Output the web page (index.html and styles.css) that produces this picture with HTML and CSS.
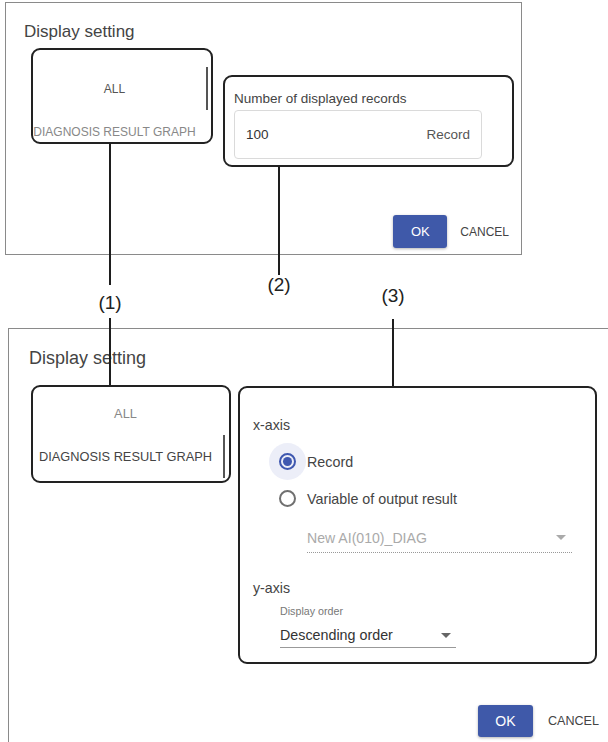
FILE: index.html
```html
<!DOCTYPE html>
<html>
  <head>
    <meta charset="utf-8" />
    <title>Display setting</title>
    <meta name="viewport" content="width=device-width, initial-scale=1.0" />
    <link rel="stylesheet" href="styles.css">
  </head>
  <body>
    <div class="page">

      <section class="dialog dialog-top">
        <h2 class="dialog-title">Display setting</h2>
        <div class="dialog-body">
          <div class="callout tabs-box">
            <ul class="tabs">
              <li class="tab active">ALL</li>
              <li class="tab">DIAGNOSIS RESULT GRAPH</li>
            </ul>
          </div>
          <div class="callout records-box">
            <div class="field-label">Number of displayed records</div>
            <div class="field">
              <span class="field-value">100</span>
              <span class="field-unit">Record</span>
            </div>
          </div>
        </div>
        <div class="actions">
          <button class="btn-ok">OK</button>
          <button class="btn-cancel">CANCEL</button>
        </div>
      </section>

      <section class="dialog dialog-bottom">
        <h2 class="dialog-title">Display setting</h2>
        <div class="dialog-body">
          <div class="callout tabs-box">
            <ul class="tabs">
              <li class="tab">ALL</li>
              <li class="tab active">DIAGNOSIS RESULT GRAPH</li>
            </ul>
          </div>
          <div class="callout axis-box">
            <div class="axis-title">x-axis</div>
            <div class="radio-row">
              <span class="radio-halo"><span class="radio checked"></span></span>
              <span class="radio-label">Record</span>
            </div>
            <div class="radio-row">
              <span class="radio-halo"><span class="radio"></span></span>
              <span class="radio-label">Variable of output result</span>
            </div>
            <div class="select select-disabled">
              <span>New AI(010)_DIAG</span>
              <span class="arrow"></span>
            </div>
            <div class="axis-title axis-y">y-axis</div>
            <div class="small-label">Display order</div>
            <div class="select select-order">
              <span>Descending order</span>
              <span class="arrow"></span>
            </div>
          </div>
        </div>
        <div class="actions">
          <button class="btn-ok">OK</button>
          <button class="btn-cancel">CANCEL</button>
        </div>
      </section>

      <!-- leader lines for the callouts -->
      <div class="leader leader-1a"></div>
      <div class="leader leader-1b"></div>
      <div class="leader leader-2"></div>
      <div class="leader leader-3"></div>
      <span class="mark mark-1">(1)</span>
      <span class="mark mark-2">(2)</span>
      <span class="mark mark-3">(3)</span>

    </div>
  </body>
</html>
```

FILE: styles.css
```css
body {
  margin: 0;
  background: #fff;
  font-family: "Liberation Sans", Arial, sans-serif;
  color: #444;
}

.page {
  position: relative;
  width: 608px;
  height: 742px;
  overflow: hidden;
}

.dialog {
  box-sizing: border-box;
  display: flex;
  flex-direction: column;
  border: 1px solid #8a8a8a;
  background: #fff;
}

.dialog-title {
  margin: 0;
  font-weight: 400;
  color: #444;
}

.dialog-body {
  display: flex;
  align-items: flex-start;
}

.callout {
  box-sizing: border-box;
  border: 2px solid #222;
  border-radius: 9px;
  overflow: hidden;
}

/* top dialog */
.dialog-top {
  margin: 2px 0 0 5px;
  width: 517px;
  height: 253px;
  padding: 19px 4px 0 0;
}
.dialog-top .dialog-title {
  margin-left: 18px;
  font-size: 17px;
  line-height: 20px;
}
.dialog-top .dialog-body {
  margin-top: 6px;
  margin-left: 25px;
}
.dialog-top .tabs-box {
  width: 182px;
  height: 96px;
}
.dialog-top .tabs {
  padding-top: 17px;
}
.dialog-top .tab {
  width: 175px;
  padding-right: 10px;
  font-size: 12px;
  color: #888;
}
.dialog-top .tab.active {
  color: #555;
}

.records-box {
  margin: 27px 0 0 10px;
  width: 291px;
  height: 92px;
  padding: 14px 0 0 9px;
}
.field-label {
  font-size: 13.5px;
  line-height: 16px;
  color: #444;
}
.field {
  box-sizing: border-box;
  margin-top: 3px;
  width: 248px;
  height: 49px;
  border: 1px solid #dadada;
  border-radius: 4px;
  padding: 0 11px;
  display: flex;
  align-items: center;
  justify-content: space-between;
  font-size: 13.5px;
}
.field-value {
  color: #333;
}
.field-unit {
  color: #555;
}

.dialog-top .actions {
  margin-top: 48px;
}

/* tab list */
.tabs {
  list-style: none;
  margin: 0;
  padding: 0;
}
.tab {
  box-sizing: border-box;
  height: 43px;
  display: flex;
  align-items: center;
  justify-content: center;
  white-space: nowrap;
  border-right: 2px solid transparent;
}
.tab.active {
  border-right-color: #555;
}

/* actions */
.actions {
  display: flex;
  justify-content: flex-end;
  align-items: center;
}
.btn-ok {
  width: 54px;
  height: 33px;
  border: none;
  border-radius: 3px;
  background: #3f59a9;
  color: #fff;
  font-family: inherit;
  font-size: 13px;
  box-shadow: 0 1px 3px rgba(0, 0, 0, 0.3);
}
.btn-cancel {
  margin-left: 5px;
  padding: 0 8px;
  border: none;
  background: none;
  color: #444;
  font-family: inherit;
  font-size: 12px;
}

/* bottom dialog */
.dialog-bottom {
  margin: 73px 0 0 8px;
  width: 612px;
  height: 430px;
  padding: 19px 12px 0 0;
}
.dialog-bottom .dialog-title {
  margin-left: 20px;
  font-size: 18px;
  line-height: 20px;
}
.dialog-bottom .dialog-body {
  margin-top: 17px;
  margin-left: 22px;
}
.dialog-bottom .tabs-box {
  width: 200px;
  height: 98px;
}
.dialog-bottom .tabs {
  padding-top: 5px;
}
.dialog-bottom .tab {
  width: 192px;
  padding-right: 5px;
  font-size: 12.8px;
  color: #888;
}
.dialog-bottom .tab.active {
  color: #444;
}
.dialog-bottom .actions {
  margin-top: 41px;
}
.dialog-bottom .btn-ok {
  width: 55px;
  height: 32px;
  font-size: 14px;
}
.dialog-bottom .btn-cancel {
  margin-left: 7px;
  font-size: 12.6px;
}

.axis-box {
  margin: 1px 0 0 7px;
  width: 359px;
  height: 278px;
  padding: 29px 0 0 13px;
}
.axis-title {
  font-size: 14.2px;
  line-height: 16px;
  color: #444;
}
.radio-row {
  display: flex;
  align-items: center;
  height: 37px;
  margin-left: 16px;
}
.axis-title + .radio-row {
  margin-top: 10px;
}
.radio-halo {
  width: 37px;
  height: 37px;
  border-radius: 50%;
  display: flex;
  align-items: center;
  justify-content: center;
}
.radio-halo:has(.checked) {
  background: #eceef8;
}
.radio {
  box-sizing: border-box;
  width: 17px;
  height: 17px;
  border: 2px solid #707070;
  border-radius: 50%;
  display: flex;
  align-items: center;
  justify-content: center;
}
.radio.checked {
  border-color: #3f58b0;
}
.radio.checked::after {
  content: "";
  width: 9px;
  height: 9px;
  border-radius: 50%;
  background: #3f58b0;
}
.radio-label {
  margin-left: 1px;
  font-size: 14.3px;
  color: #444;
}

.select {
  box-sizing: border-box;
  display: flex;
  align-items: center;
  justify-content: space-between;
}
.arrow {
  width: 0;
  height: 0;
  border-left: 5px solid transparent;
  border-right: 5px solid transparent;
  border-top: 5px solid #666;
}
.select-disabled {
  margin: 6px 0 0 54px;
  width: 265px;
  height: 30px;
  padding-right: 6px;
  border-bottom: 1px dotted #999;
  font-size: 14.1px;
  color: #aaa;
}
.select-disabled .arrow {
  border-top-color: #aaa;
}
.axis-y {
  margin-top: 27px;
}
.small-label {
  margin: 9px 0 0 27px;
  font-size: 10.7px;
  line-height: 13px;
  color: #777;
}
.select-order {
  margin: 5px 0 0 27px;
  width: 176px;
  height: 25px;
  padding-right: 5px;
  border-bottom: 1px solid #999;
  font-size: 14.3px;
  color: #333;
}

/* annotation leaders */
.leader {
  position: absolute;
  width: 2px;
  background: #1e1e1e;
}
.leader-1a {
  left: 109px;
  top: 143px;
  height: 142px;
}
.leader-1b {
  left: 109px;
  top: 318px;
  height: 67px;
}
.leader-2 {
  left: 278px;
  top: 166px;
  height: 109px;
}
.leader-3 {
  left: 392px;
  top: 319px;
  height: 67px;
}
.mark {
  position: absolute;
  width: 40px;
  margin-left: -20px;
  text-align: center;
  font-size: 19px;
  line-height: 20px;
  color: #222;
}
.mark-1 {
  left: 110px;
  top: 293px;
}
.mark-2 {
  left: 279px;
  top: 275px;
}
.mark-3 {
  left: 393px;
  top: 286px;
}
```
